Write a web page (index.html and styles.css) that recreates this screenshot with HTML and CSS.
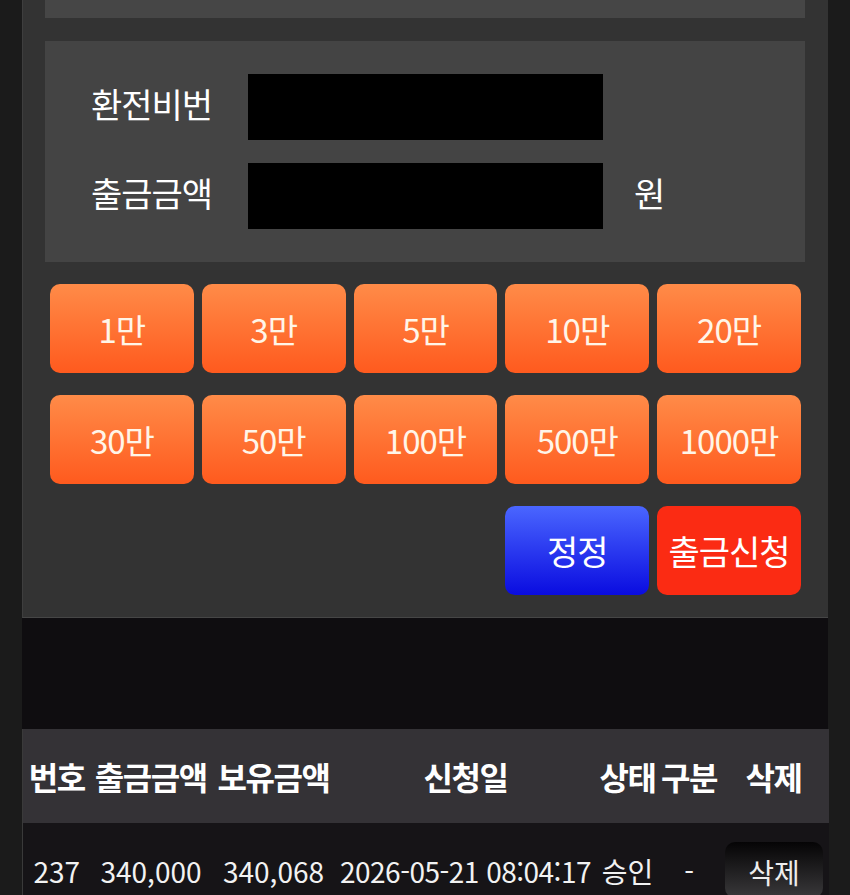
FILE: index.html
```html
<!DOCTYPE html>
<html lang="ko">
<head>
    <meta charset="UTF-8">
    <meta name="viewport" content="width=device-width, initial-scale=1.0">
    <title>출금신청</title>
    <link rel="stylesheet" href="styles.css">
</head>
<body>

    <div class="wrap">
        <div class="panel">
            <div class="top-box"></div>

            <div class="form-box">
                <div class="form-row">
                    <label class="label">환전비번</label>
                    <input class="field" type="password">
                </div>
                <div class="form-row">
                    <label class="label">출금금액</label>
                    <input class="field" type="text">
                    <span class="unit">원</span>
                </div>
            </div>

            <div class="amounts">
                <button class="btn amt">1만</button>
                <button class="btn amt">3만</button>
                <button class="btn amt">5만</button>
                <button class="btn amt">10만</button>
                <button class="btn amt">20만</button>
                <button class="btn amt">30만</button>
                <button class="btn amt">50만</button>
                <button class="btn amt">100만</button>
                <button class="btn amt">500만</button>
                <button class="btn amt">1000만</button>
                <button class="btn reset">정정</button>
                <button class="btn submit">출금신청</button>
            </div>
        </div>

        <div class="spacer"></div>

        <table class="history">
            <colgroup>
                <col style="width:68px">
                <col style="width:121px">
                <col style="width:124px">
                <col style="width:260px">
                <col style="width:64px">
                <col style="width:59px">
                <col style="width:110px">
            </colgroup>
            <thead>
                <tr>
                    <th>번호</th>
                    <th>출금금액</th>
                    <th>보유금액</th>
                    <th>신청일</th>
                    <th>상태</th>
                    <th>구분</th>
                    <th>삭제</th>
                </tr>
            </thead>
            <tbody>
                <tr>
                    <td>237</td>
                    <td>340,000</td>
                    <td>340,068</td>
                    <td>2026-05-21 08:04:17</td>
                    <td>승인</td>
                    <td>-</td>
                    <td><button class="del">삭제</button></td>
                </tr>
            </tbody>
        </table>
    </div>

</body>
</html>
```

FILE: styles.css
```css
body {
    margin: 0;
    padding: 0;
    background-color: #1b1b1b;
    font-family: "Noto Sans CJK KR", "Noto Sans", sans-serif;
    color: #fff;
    overflow: hidden;
}
.wrap {
    width: 806px;
    margin-left: 22px;
}
.panel {
    background: #333;
    border-left: 1px solid #3e3e3e;
    border-bottom: 1px solid #464646;
    padding: 0 23px 22px 22px;
}
.top-box {
    height: 18px;
    background: #464646;
    margin-bottom: 23px;
}
.form-box {
    background: #444;
    padding: 33px 0 33px 46px;
    display: flex;
    flex-direction: column;
    gap: 23px;
}
.form-row {
    display: flex;
    align-items: center;
    height: 66px;
}
.label {
    width: 157px;
    font-size: 34px;
    line-height: 1;
    margin-bottom: 6px;
    letter-spacing: -1px;
}
.field {
    width: 355px;
    height: 66px;
    box-sizing: border-box;
    border: none;
    background: #000;
    margin: 0;
}
.unit {
    margin-left: 31px;
    margin-bottom: 6px;
    font-size: 34px;
    line-height: 1;
}
.amounts {
    display: grid;
    grid-template-columns: repeat(5, 1fr);
    grid-auto-rows: 89px;
    column-gap: 8px;
    row-gap: 22px;
    margin: 22px 4px 0 5px;
}
.btn {
    border: none;
    border-radius: 10px;
    font-family: "Noto Sans CJK KR", "Noto Sans", sans-serif;
    font-size: 33px;
    letter-spacing: -1px;
    color: #fff5e8;
    padding: 0;
    cursor: pointer;
}
.amt {
    background: linear-gradient(to bottom, #ff8b48, #ff5a1e);
}
.reset {
    grid-column: 4;
    font-size: 34px;
    color: #fff;
    background: linear-gradient(to bottom, #4a66ff, #0a0ce0);
}
.submit {
    grid-column: 5;
    font-size: 34px;
    color: #fff;
    background: #fb2b13;
}
.spacer {
    height: 111px;
    background: #0f0d10;
}
.history {
    width: 806px;
    border-collapse: collapse;
    table-layout: fixed;
}
.history th {
    height: 94px;
    background: #343236;
    font-size: 32px;
    font-weight: 700;
    padding: 0;
    white-space: nowrap;
    letter-spacing: -1.5px;
}
.history td {
    background: #161417;
    font-size: 28px;
    text-align: center;
    padding: 28px 0 0;
    height: 60px;
    vertical-align: top;
    white-space: nowrap;
    color: #f2f2f2;
}
.history td:first-child,
.history th:first-child {
    border-left: 1px solid #3a3a3a;
}
.history td:nth-child(4) {
    letter-spacing: -0.5px;
}
.history td:last-child {
    padding-top: 19px;
}
.del {
    width: 98px;
    height: 56px;
    margin-left: 1px;
    padding: 4px 0 0;
    border: none;
    border-radius: 10px;
    background: linear-gradient(to bottom, #050405, #3a393b);
    color: #eee;
    font-family: "Noto Sans CJK KR", "Noto Sans", sans-serif;
    font-size: 28px;
}
```
